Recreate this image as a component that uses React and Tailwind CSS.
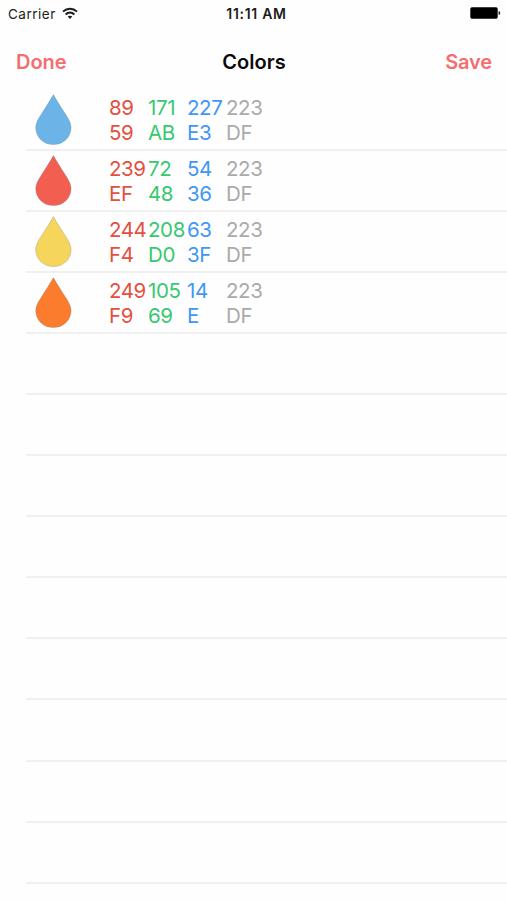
const COLORS = [
    { id: 'blue', fill: '#6cb4e7', rgba: [89, 171, 227, 223] },
    { id: 'red', fill: '#f25f50', rgba: [239, 72, 54, 223] },
    { id: 'yellow', fill: '#f5d55b', rgba: [244, 208, 63, 223] },
    { id: 'orange', fill: '#fb7c2c', rgba: [249, 105, 14, 223] },
]

// red, green, blue, alpha
const CHANNELS = ['text-[#e3503e]', 'text-[#37c871]', 'text-[#4097f7]', 'text-[#aaaaaa]']

const EMPTY_ROWS = 9

const toHex = (value) => value.toString(16).toUpperCase()

function WifiIcon() {
    return (
        <svg className="relative -top-px" width="16" height="12" viewBox="0 0 16 12" fill="none" stroke="#1c1c1c" strokeWidth="2">
            <path d="M1 4.6C5 0.8 11 0.8 15 4.6" />
            <path d="M3.6 7.4C6.2 5 9.8 5 12.4 7.4" />
            <path d="M8 12L5.7 9.6C7 8.4 9 8.4 10.3 9.6Z" fill="#1c1c1c" stroke="none" />
        </svg>
    )
}

function BatteryIcon() {
    return (
        <svg className="relative -top-px" width="31" height="12" viewBox="0 0 31 12">
            <rect x="0.3" y="0.3" width="27.4" height="11.4" rx="1.6" fill="#000" />
            <path d="M28.6 4C30.8 4.4 30.8 7.6 28.6 8Z" fill="#222" />
        </svg>
    )
}

function Drop({ fill }) {
    return (
        <svg width="37" height="52" viewBox="0 0 37 52">
            <path
                d="M18.4 0.6C21.5 6.4 26.5 13.8 30.6 20.2C34 25.5 36.1 29.4 36.1 33.4C36.1 43.2 28.4 50.6 18.4 50.6S0.7 43.2 0.7 33.4C0.7 29.4 2.8 25.5 6.2 20.2C10.3 13.8 15.3 6.4 18.4 0.6Z"
                fill={fill}
                stroke="#777777"
                strokeOpacity="0.45"
                strokeWidth="0.6"
            />
        </svg>
    )
}

function ColorRow({ color }) {
    return (
        <div className="flex h-full pl-[9px]">
            <div className="w-[74px] pt-[4px]">
                <Drop fill={color.fill} />
            </div>
            {color.rgba.map((value, i) => (
                <div key={i} className={`w-[39px] shrink-0 pt-[5px] text-[20.5px] leading-[25px] tracking-[-0.4px] whitespace-nowrap ${CHANNELS[i]}`}>
                    <div>{value}</div>
                    <div>{toHex(value)}</div>
                </div>
            ))}
        </div>
    )
}

export default function App() {
    return (
        <div className="h-[900px] w-[507px] overflow-hidden bg-[#fefefe] font-['Inter','Liberation_Sans',sans-serif]">
            {/* status bar */}
            <div className="grid h-[28px] grid-cols-3 items-center pl-[8px] pr-[6px] text-[13.5px] text-[#1c1c1c]">
                <div className="flex items-center gap-[6px]">
                    <span className="tracking-[0.5px]">Carrier</span>
                    <WifiIcon />
                </div>
                <div className="pb-px pl-[4px] text-center text-[14px] font-semibold tracking-[0.7px]">11:11 AM</div>
                <div className="flex justify-end">
                    <BatteryIcon />
                </div>
            </div>

            {/* navigation bar */}
            <div className="grid h-[62px] grid-cols-3 items-center pl-[16px] pr-[15px] pt-[6px] text-[20px] font-semibold">
                <button type="button" className="text-left text-[#f46e70]">Done</button>
                <h1 className="text-center text-[#0a0a0a]">Colors</h1>
                <button type="button" className="text-right tracking-[-0.15px] text-[#f46e70]">Save</button>
            </div>

            <ul>
                {COLORS.map((color) => (
                    <li key={color.id} className="ml-[26px] h-[61.06px] border-b-2 border-[#f0f0f1]">
                        <ColorRow color={color} />
                    </li>
                ))}
                {Array.from({ length: EMPTY_ROWS }, (_, i) => (
                    <li key={i} className="ml-[26px] h-[61.06px] border-b-2 border-[#f0f0f1]" />
                ))}
            </ul>
        </div>
    )
}
